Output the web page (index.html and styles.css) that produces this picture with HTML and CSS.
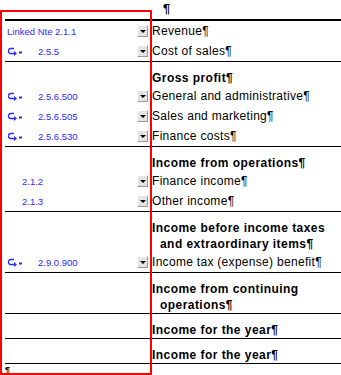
FILE: index.html
```html
<!DOCTYPE html>
<html lang="en">
<head>
    <meta charset="UTF-8">
    <meta name="viewport" content="width=device-width, initial-scale=1.0">
    <title>Income statement - linked notes</title>
    <link rel="stylesheet" href="styles.css">
</head>
<body>
    <div class="sheet">
        <div class="head">¶</div>

        <div class="group top">
            <div class="row">
                <div class="link"><span class="note">Linked Nte 2.1.1</span></div>
                <span class="drop"></span>
                <div class="label">Revenue¶</div>
            </div>
            <div class="row">
                <div class="link">
                    <svg class="icon" viewBox="0 0 16 9"><path d="M7 1.5H3.5Q1.5 1.5 1.5 4Q1.5 6.5 3.5 6.5H7.5"/><polygon points="7,4 10,6.5 7,9"/><rect x="12" y="4.5" width="3" height="2"/></svg>
                    <span class="num">2.5.5</span>
                </div>
                <span class="drop"></span>
                <div class="label">Cost of sales¶</div>
            </div>
        </div>

        <div class="group">
            <div class="row title">
                <div class="link"></div>
                <span></span>
                <div class="label">Gross profit¶</div>
            </div>
            <div class="row">
                <div class="link">
                    <svg class="icon" viewBox="0 0 16 9"><path d="M7 1.5H3.5Q1.5 1.5 1.5 4Q1.5 6.5 3.5 6.5H7.5"/><polygon points="7,4 10,6.5 7,9"/><rect x="12" y="4.5" width="3" height="2"/></svg>
                    <span class="num">2.5.6.500</span>
                </div>
                <span class="drop"></span>
                <div class="label">General and administrative¶</div>
            </div>
            <div class="row">
                <div class="link">
                    <svg class="icon" viewBox="0 0 16 9"><path d="M7 1.5H3.5Q1.5 1.5 1.5 4Q1.5 6.5 3.5 6.5H7.5"/><polygon points="7,4 10,6.5 7,9"/><rect x="12" y="4.5" width="3" height="2"/></svg>
                    <span class="num">2.5.6.505</span>
                </div>
                <span class="drop"></span>
                <div class="label">Sales and marketing¶</div>
            </div>
            <div class="row">
                <div class="link">
                    <svg class="icon" viewBox="0 0 16 9"><path d="M7 1.5H3.5Q1.5 1.5 1.5 4Q1.5 6.5 3.5 6.5H7.5"/><polygon points="7,4 10,6.5 7,9"/><rect x="12" y="4.5" width="3" height="2"/></svg>
                    <span class="num">2.5.6.530</span>
                </div>
                <span class="drop"></span>
                <div class="label">Finance costs¶</div>
            </div>
        </div>

        <div class="group">
            <div class="row title">
                <div class="link"></div>
                <span></span>
                <div class="label">Income from operations¶</div>
            </div>
            <div class="row">
                <div class="link"><span class="num plain">2.1.2</span></div>
                <span class="drop"></span>
                <div class="label">Finance income¶</div>
            </div>
            <div class="row">
                <div class="link"><span class="num plain">2.1.3</span></div>
                <span class="drop"></span>
                <div class="label">Other income¶</div>
            </div>
        </div>

        <div class="group">
            <div class="row title">
                <div class="link"></div>
                <span></span>
                <div class="label">Income before income taxes and extraordinary items¶</div>
            </div>
            <div class="row">
                <div class="link">
                    <svg class="icon" viewBox="0 0 16 9"><path d="M7 1.5H3.5Q1.5 1.5 1.5 4Q1.5 6.5 3.5 6.5H7.5"/><polygon points="7,4 10,6.5 7,9"/><rect x="12" y="4.5" width="3" height="2"/></svg>
                    <span class="num">2.9.0.900</span>
                </div>
                <span class="drop"></span>
                <div class="label">Income tax (expense) benefit¶</div>
            </div>
        </div>

        <div class="group">
            <div class="row title">
                <div class="link"></div>
                <span></span>
                <div class="label">Income from continuing operations¶</div>
            </div>
        </div>

        <div class="group">
            <div class="row title">
                <div class="link"></div>
                <span></span>
                <div class="label">Income for the year¶</div>
            </div>
        </div>

        <div class="group">
            <div class="row title">
                <div class="link"></div>
                <span></span>
                <div class="label">Income for the year¶</div>
            </div>
        </div>

        <div class="tail">¶</div>
    </div>

    <!-- highlight box drawn over the linked-note column -->
    <div class="marker"></div>
</body>
</html>
```

FILE: styles.css
```css
* {
    margin: 0;
    padding: 0;
    box-sizing: border-box;
}

body {
    background-color: #fff;
    font-family: 'Liberation Sans', Arial, sans-serif;
    color: #000;
    position: relative;
    width: 341px;
    height: 375px;
    overflow: hidden;
}

.sheet {
    margin-left: 5px;
}

.head {
    height: 19px;
    padding-left: 158px;
    font-size: 13px;
    font-weight: bold;
    line-height: 18px;
}

.group {
    border-bottom: 1px solid #000;
}

.group.top {
    border-top: 2px solid #000;
}

.row {
    display: grid;
    grid-template-columns: 132px 11px 1fr;
    align-items: center;
    min-height: 20px;
}

.link {
    display: flex;
    align-items: center;
    padding-left: 2px;
    height: 20px;
    color: #2b2bff;
    font-size: 9.5px;
}

.icon {
    width: 16px;
    height: 9px;
    fill: #2b2bff;
}

.icon path {
    fill: none;
    stroke: #2b2bff;
    stroke-width: 1.3;
}

.num {
    margin-left: 15px;
}

.num.plain {
    margin-left: 15px;
}

.drop {
    position: relative;
    width: 11px;
    height: 12px;
    background-color: #e4e4e4;
    border-top: 1px solid #fff;
    border-left: 1px solid #fff;
    border-right: 1px solid #9a9a9a;
    border-bottom: 1px solid #9a9a9a;
}

.drop::after {
    content: "";
    position: absolute;
    left: 2px;
    top: 4px;
    border-left: 3px solid transparent;
    border-right: 3px solid transparent;
    border-top: 3px solid #000;
}

.label {
    margin-left: 4px;
    font-size: 12px;
    letter-spacing: 0.3px;
    line-height: 20px;
}

.title {
    padding-top: 8px;
}

.title .link {
    height: 16px;
}

.title .label {
    font-weight: bold;
    line-height: 16px;
    letter-spacing: 0.45px;
    padding-left: 8px;
    text-indent: -8px;
}

.tail {
    font-size: 9px;
    font-weight: bold;
    line-height: 9px;
    padding-top: 2px;
}

.marker {
    position: absolute;
    left: 0;
    top: 10px;
    width: 152px;
    height: 365px;
    border: 2px solid #f00;
}
```
